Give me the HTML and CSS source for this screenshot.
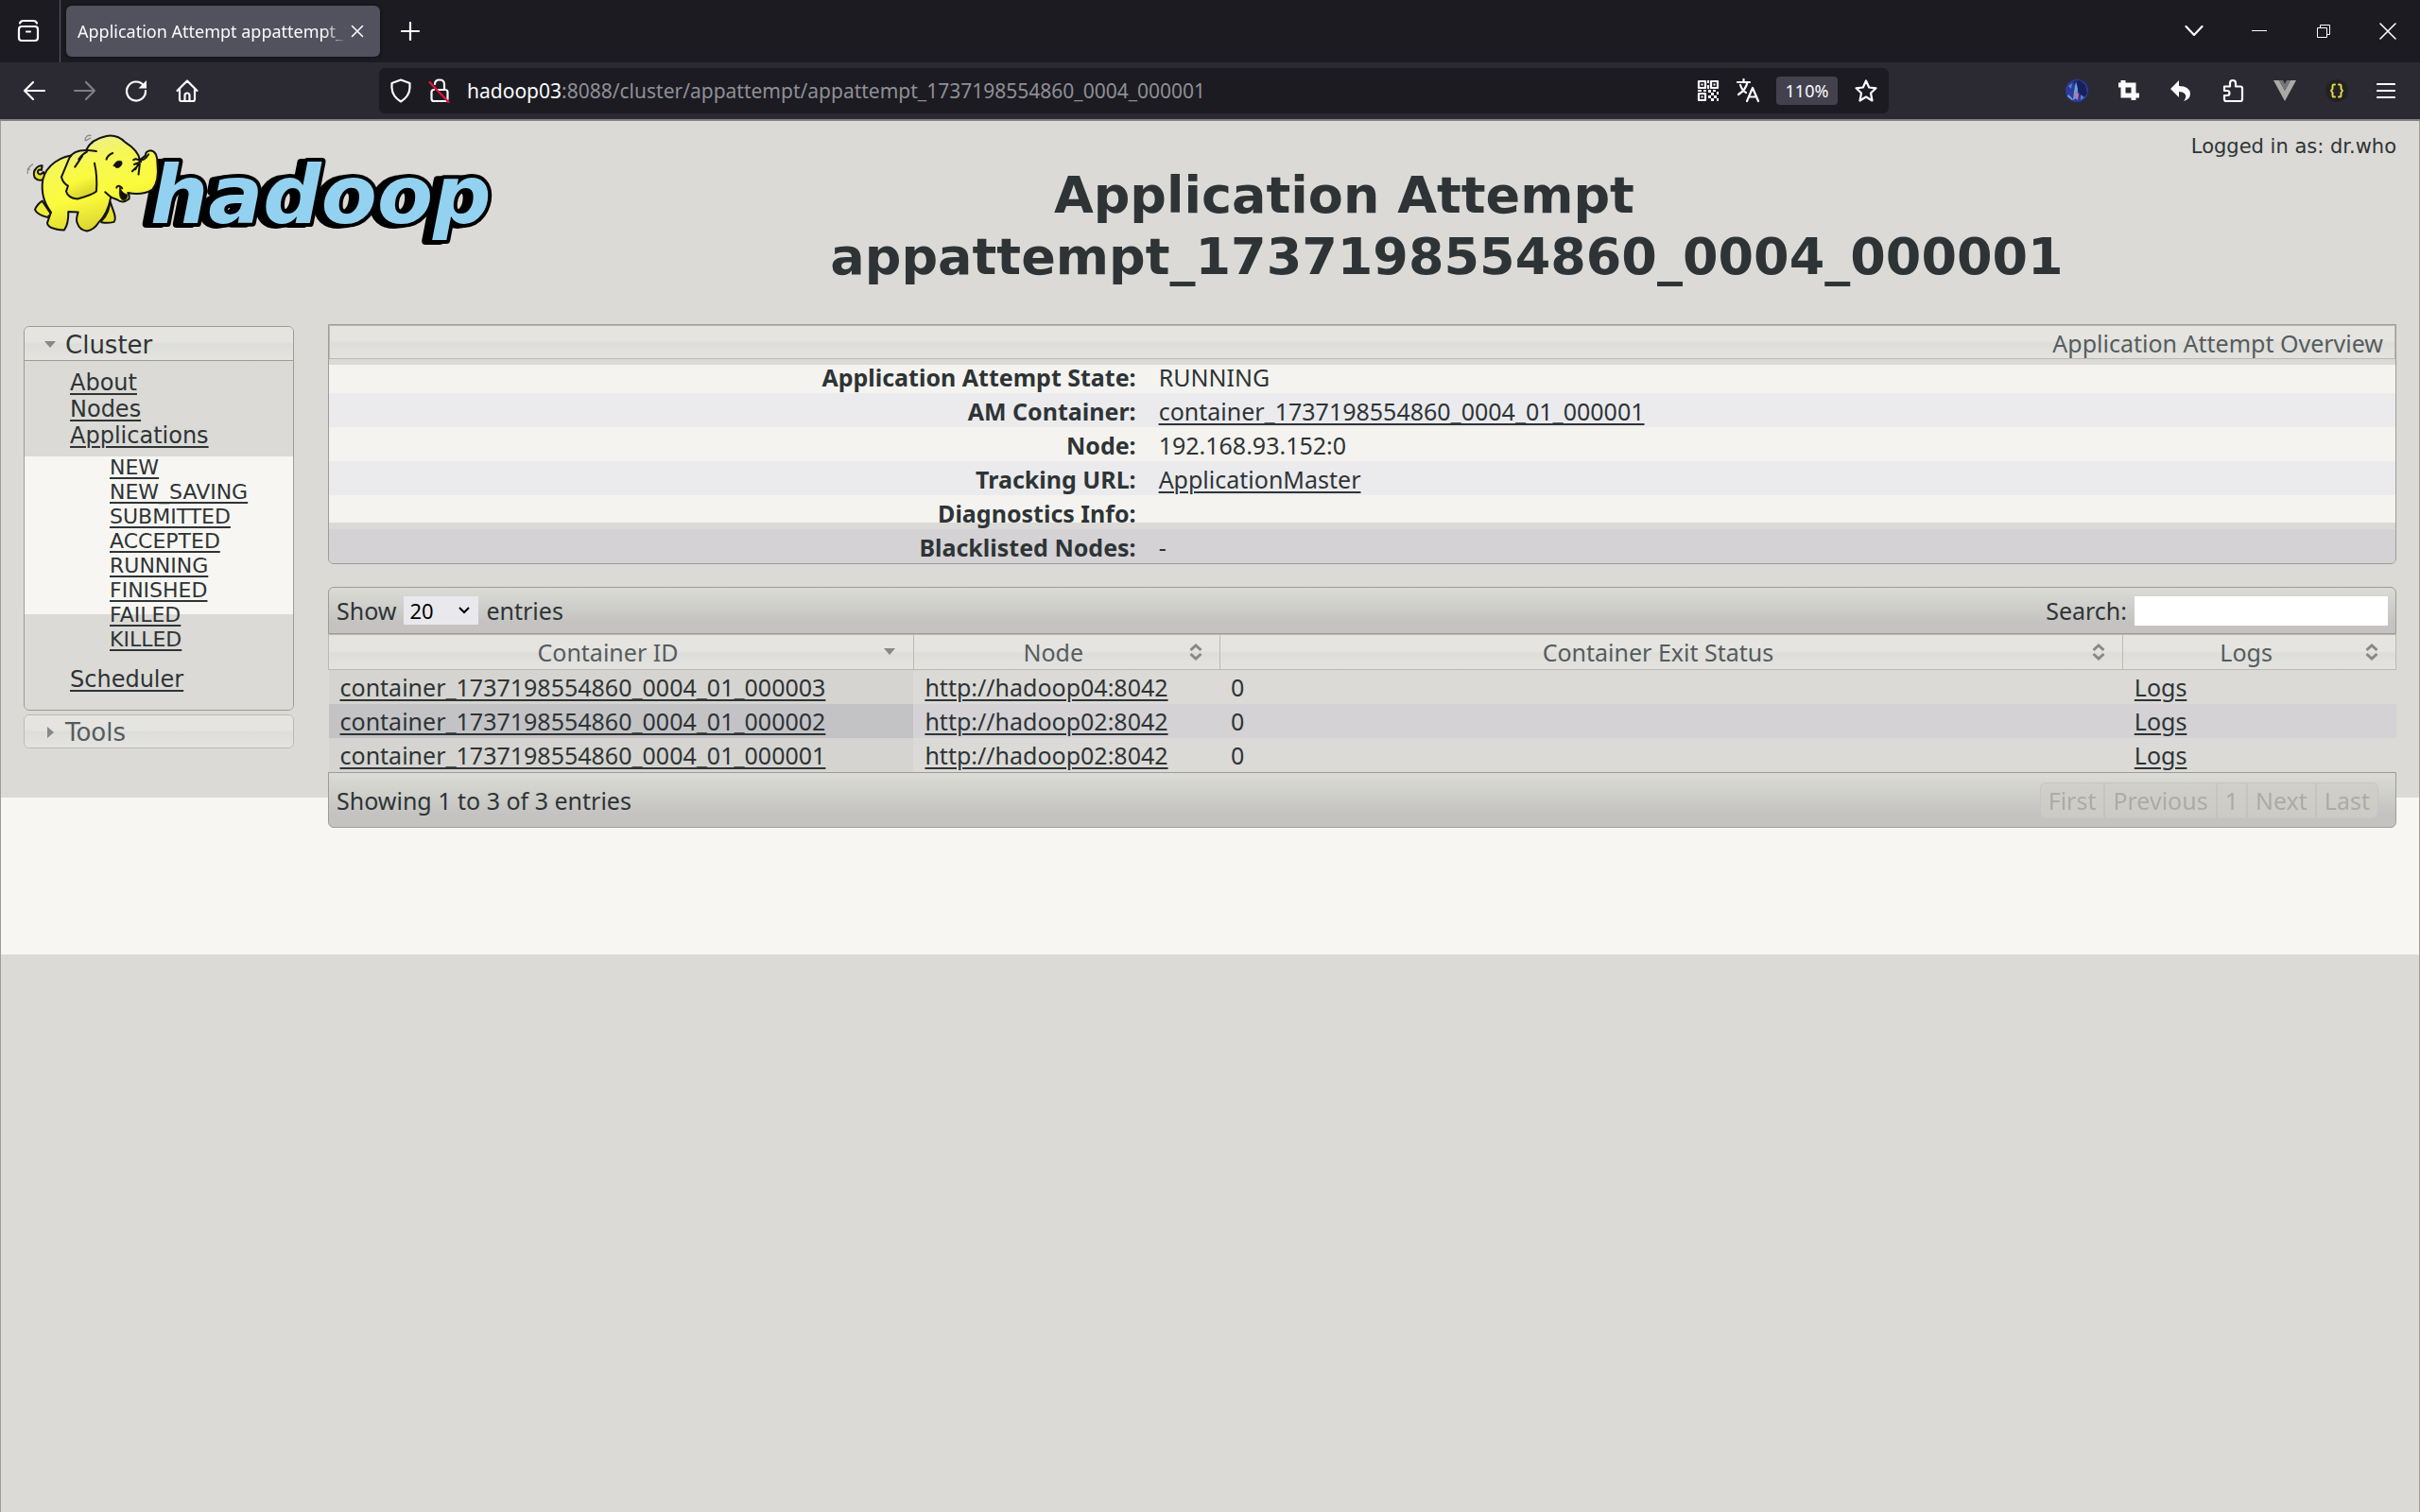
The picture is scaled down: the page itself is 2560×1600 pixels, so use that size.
FILE: index.html
```html
<!DOCTYPE html>
<html lang="en">
<head>
<meta charset="utf-8">
<title>Application Attempt appattempt_1737198554860_0004_000001</title>
<link rel="stylesheet" href="styles.css">
</head>
<body>
<header class="browser">
  <div class="tabs">
    <button class="icon-btn tab-list" aria-label="Recent browsing"><svg width="26" height="26" viewBox="0 0 26 26"><path d="M4 4.500Q5 2 7.500 2h11Q21 2 22 4.500M6 8h14q3 0 3 3v9q0 3-3 3H6q-3 0-3-3v-9q0-3 3-3zM11 13.500h4"/></svg></button>
    <div class="tab">
      <span class="tab-title">Application Attempt appattempt_1737198554860_0004_000001</span>
      <button class="icon-btn tab-close" aria-label="Close tab"><svg width="14" height="14" viewBox="0 0 14 14"><path class="thin" d="M1.500 1.500l11 11M12.500 1.500l-11 11"/></svg></button>
    </div>
    <button class="icon-btn new-tab" aria-label="New tab"><svg width="20" height="20" viewBox="0 0 20 20"><path d="M10 1v18M1 10h18"/></svg></button>
    <div class="window-controls">
      <button class="icon-btn" aria-label="List all tabs"><svg width="20" height="20" viewBox="0 0 20 20"><path d="M1.500 5l8.500 9 8.500-9"/></svg></button>
      <button class="icon-btn" aria-label="Minimize"><svg width="18" height="18" viewBox="0 0 18 18"><path class="hair" d="M1 8.500h16"/></svg></button>
      <button class="icon-btn" aria-label="Restore"><svg width="18" height="18" viewBox="0 0 18 18"><path class="hair" d="M2.500 5.500h10v10h-10zM5.500 5V2.500h10v10H13"/></svg></button>
      <button class="icon-btn" aria-label="Close"><svg width="18" height="18" viewBox="0 0 18 18"><path class="thin" d="M1 1l16 16M17 1L1 17"/></svg></button>
    </div>
  </div>
  <div class="toolbar">
    <div class="nav-buttons">
      <button class="icon-btn" aria-label="Back"><svg width="26" height="26" viewBox="0 0 26 26"><path d="M24 13H3M12 4l-9 9 9 9"/></svg></button>
      <button class="icon-btn dim" aria-label="Forward"><svg width="26" height="26" viewBox="0 0 26 26"><path d="M2 13h21M14 4l9 9-9 9"/></svg></button>
      <button class="icon-btn" aria-label="Reload"><svg width="26" height="26" viewBox="0 0 26 26"><path d="M21 7.500A10 10 0 1 0 23 13"/><path class="solid" d="M24 2v8.500h-8.500z"/></svg></button>
      <button class="icon-btn" aria-label="Home"><svg width="26" height="26" viewBox="0 0 26 26"><path d="M2.500 13L13 2.500 23.500 13M5 11v11q0 2 2 2h12q2 0 2-2V11M10.500 24v-6q0-2.500 2.500-2.500t2.500 2.500v6"/></svg></button>
    </div>
    <div class="urlbar">
      <svg width="24" height="26" viewBox="0 0 24 26"><path d="M12 1.500L21.500 5v5Q21 19 12 24.500 3 19 2.500 10V5z"/></svg>
      <svg width="24" height="26" viewBox="0 0 24 26"><path d="M7 6q0-4.500 5-4.500T17 6v6M9 12h9q2.500 0 2.500 2.500v7q0 2.500-2.500 2.500H6q-2.500 0-2.500-2.500v-7Q3.500 12 6 12"/><path class="slash" d="M1.500 4l20 21"/></svg>
      <span class="url"><b>hadoop03</b>:8088/cluster/appattempt/appattempt_1737198554860_0004_000001</span>
      <svg width="24" height="24" viewBox="0 0 24 24"><path d="M2 2h7v7H2zM15 2h7v7h-7zM2 15h7v7H2z"/><path class="solid" d="M4.500 4.500h2v2h-2zM17.500 4.500h2v2h-2zM4.500 17.500h2v2h-2zM11 1h2v3h-2zM11 6h2v4h-2zM1 11h4v2H1zM7 11h3v2H7zM12 11h3v3h-3zM17 11h3v2h-3zM21 13h2v3h-2zM15 14h3v3h-3zM12 17h3v3h-3zM18 17h3v3h-3zM15 20h3v3h-3zM21 20h2v3h-2z"/></svg>
      <svg width="26" height="26" viewBox="0 0 26 26"><path d="M2 4h13M8.500 1v3M12.500 4Q11 12 3 17M5 7q2 6 6 8M12 24l6-14 6 14M14 19.500h8"/></svg>
      <button class="zoom-level">110%</button>
      <svg width="26" height="26" viewBox="0 0 26 26"><path d="M13 2.500l3.200 7 7.300.8-5.500 5.200 1.500 8L13 19.500 6.500 23.500l1.500-8L2.500 10.300l7.300-.8z"/></svg>
    </div>
    <div class="extensions">
      <button class="icon-btn avatar" aria-label="Profile"><svg width="26" height="26" viewBox="0 0 26 26"><circle cx="13" cy="13" r="12" fill="#2b3d9c"/><path class="night" d="M9 3l7-1 6 5 2 9-6 7-3-9z"/><path class="glow" d="M12 3l2 8-1 9-4 3 1-9zM4 17l5 5-1 1-5-4z"/><path class="rose" d="M11 14l4 2-1 7-4-3z"/><path class="sky" d="M17 17l4 3-4 3zM4 8l4-3-1 6z"/></svg></button>
      <button class="icon-btn" aria-label="Capture"><svg width="26" height="26" viewBox="0 0 26 26"><path class="heavy" d="M2 7h16v16M7 2v16h17"/></svg></button>
      <button class="icon-btn" aria-label="Undo"><svg width="26" height="26" viewBox="0 0 26 26"><path class="solid" d="M11 2v6q11 0 12 8 0 6-7 8 4-5 1-8-2-2-6-2v6L2 11z"/></svg></button>
      <button class="icon-btn" aria-label="Extensions"><svg width="26" height="26" viewBox="0 0 26 26"><path d="M4 8.500h6V5q0-3 3-3t3 3v3.500h5q2 0 2 2V22q0 2-2 2H6q-2 0-2-2v-4h3q2.500 0 2.500-2.500T7 13H4z"/></svg></button>
      <button class="icon-btn vue" aria-label="Vue devtools"><svg width="26" height="26" viewBox="0 0 26 26"><path class="outer" d="M1 2h6l6 11 6-11h6L13 24z"/><path class="inner" d="M7 2h4l2 4 2-4h4l-6 11z"/></svg></button>
      <button class="icon-btn" aria-label="JSON viewer"><svg width="26" height="26" viewBox="0 0 26 26"><circle cx="13" cy="13" r="12" fill="#222"/><path class="brace" d="M11 6.500H9.500Q8.500 6.500 8.500 8v3L7 13l1.500 2v3q0 1.500 1 1.500H11M15 6.500h1.500q1 0 1 1.500v3l1.500 2-1.500 2v3q0 1.500-1 1.500H15"/></svg></button>
      <button class="icon-btn" aria-label="Menu"><svg width="20" height="20" viewBox="0 0 20 20"><path d="M1 3h18M1 10h18M1 17h18"/></svg></button>
    </div>
  </div>
</header>

<div class="page">
  <div class="masthead">
    <a class="logo" href="#" aria-label="Hadoop">
      <svg width="510" height="140" viewBox="0 0 510 140">
        <defs>
          <linearGradient id="skin" x1="0" y1="0" x2="0.300" y2="1"><stop offset="0" stop-color="#e9e9ae"/><stop offset="0.350" stop-color="#f6f755"/><stop offset="0.700" stop-color="#fbfb3c"/><stop offset="1" stop-color="#dcd830"/></linearGradient>
        </defs>
        <text x="139" y="106">hadoop</text>
        <g class="elephant" transform="scale(0.333)">
          <path fill="#e6e230" d="M262 312Q290 285 288 245L302 285Q309 306 302 315 282 320 262 316z"/>
          <path fill="#efec3a" d="M74 248Q58 258 51 276 58 292 90 300L102 290z"/>
          <path fill="#e6e230" d="M84 176Q66 190 50 174 43 156 55 144 64 134 74 136L72 150Q60 146 60 158 66 170 78 156z"/>
          <path fill="url(#skin)" d="M186 102C130 102 86 138 76 180 70 220 80 256 102 284L90 318Q92 338 144 341 158 320 157 282L188 284Q180 308 186 320 192 340 216 344 240 338 252 318 282 290 292 236L312 244Q330 258 350 242 352 230 346 222 390 232 424 212 446 186 440 130 440 90 418 88 402 90 402 104L384 118C380 90 354 72 338 62 320 44 300 38 278 42 240 50 222 68 214 86z"/>
          <path fill="url(#skin)" d="M246 90C200 82 170 90 160 112L135 172Q140 192 156 200L150 218Q156 240 186 242 232 230 246 218 250 170 240 128"/>
          <path fill="none" d="M216 92q-16 8-26 24M202 104q-10 16-24 36M278 116q4-14 20-20M364 118q10-8 24 6M366 132l16-6-12 22M384 130l-4 34M360 154l12-12M384 118q16 2 28-18M310 206q6-12 18 2M274 220l18 16"/>
          <path class="ink" d="M300 136q10-20 26-14 6 10-8 20-10 4-14-4zM322 206q4 18 22 22 2 16-12 18-16-2-12-40z"/>
          <path class="motion" fill="none" d="M28 160q-2-18 16-28M34 148l-6-2M210 56q2-18 18-16M214 56l14-8"/>
        </g>
      </svg>
    </a>
    <div class="heading">
      <div class="user">Logged in as: dr.who</div>
      <h1>Application Attempt appattempt_1737198554860_0004_000001</h1>
    </div>
  </div>

  <div class="columns">
    <nav class="side">
      <section class="fold">
        <h3><svg class="arrow" width="14" height="14" viewBox="0 0 14 14"><path d="M1 3h12L7 10z"/></svg>Cluster</h3>
        <ul class="menu">
          <li><a href="#">About</a></li>
          <li><a href="#">Nodes</a></li>
          <li><a href="#">Applications</a>
            <ul class="states">
              <li><a href="#">NEW</a></li>
              <li><a href="#">NEW_SAVING</a></li>
              <li><a href="#">SUBMITTED</a></li>
              <li><a href="#">ACCEPTED</a></li>
              <li><a href="#">RUNNING</a></li>
              <li><a href="#">FINISHED</a></li>
              <li><a href="#">FAILED</a></li>
              <li><a href="#">KILLED</a></li>
            </ul>
          </li>
          <li><a href="#">Scheduler</a></li>
        </ul>
      </section>
      <section class="fold closed">
        <h3><svg class="arrow" width="14" height="14" viewBox="0 0 14 14"><path d="M4 1v12l7-6z"/></svg>Tools</h3>
      </section>
    </nav>

    <main class="content">
      <section class="overview">
        <h2>Application Attempt Overview</h2>
        <table>
          <tr><th scope="row">Application Attempt State:</th><td>RUNNING</td></tr>
          <tr><th scope="row">AM Container:</th><td><a href="#">container_1737198554860_0004_01_000001</a></td></tr>
          <tr><th scope="row">Node:</th><td>192.168.93.152:0</td></tr>
          <tr><th scope="row">Tracking URL:</th><td><a href="#">ApplicationMaster</a></td></tr>
          <tr><th scope="row">Diagnostics Info:</th><td></td></tr>
          <tr><th scope="row">Blacklisted Nodes:</th><td>-</td></tr>
        </table>
      </section>

      <section class="grid">
        <div class="bar bar-top">
          <label class="length">Show <span class="select-wrap"><select><option>20</option><option>40</option><option>60</option></select><svg width="12" height="10" viewBox="0 0 12 10"><path d="M1 2l5 5 5-5"/></svg></span> entries</label>
          <label class="search">Search: <input type="text"></label>
        </div>
        <table>
          <thead>
            <tr>
              <th class="c-id"><div>Container ID<svg class="down" width="14" height="18" viewBox="0 0 14 18"><path d="M1 5h12l-6 7z"/></svg></div></th>
              <th class="c-node"><div>Node<svg width="14" height="18" viewBox="0 0 14 18"><path d="M1.500 7L7 2l5.500 5M1.500 11L7 16l5.500-5"/></svg></div></th>
              <th class="c-exit"><div>Container Exit Status<svg width="14" height="18" viewBox="0 0 14 18"><path d="M1.500 7L7 2l5.500 5M1.500 11L7 16l5.500-5"/></svg></div></th>
              <th class="c-logs"><div>Logs<svg width="14" height="18" viewBox="0 0 14 18"><path d="M1.500 7L7 2l5.500 5M1.500 11L7 16l5.500-5"/></svg></div></th>
            </tr>
          </thead>
          <tbody>
            <tr><td><a href="#">container_1737198554860_0004_01_000003</a></td><td><a href="#">http://hadoop04:8042</a></td><td>0</td><td><a href="#">Logs</a></td></tr>
            <tr><td><a href="#">container_1737198554860_0004_01_000002</a></td><td><a href="#">http://hadoop02:8042</a></td><td>0</td><td><a href="#">Logs</a></td></tr>
            <tr><td><a href="#">container_1737198554860_0004_01_000001</a></td><td><a href="#">http://hadoop02:8042</a></td><td>0</td><td><a href="#">Logs</a></td></tr>
          </tbody>
        </table>
        <div class="bar bar-bottom">
          <span>Showing 1 to 3 of 3 entries</span>
          <div class="pager"><button disabled>First</button><button disabled>Previous</button><button disabled>1</button><button disabled>Next</button><button disabled>Last</button></div>
        </div>
      </section>
    </main>
  </div>
</div>
</body>
</html>
```
FILE: styles.css
```css
* { box-sizing: border-box; }

body {
  margin: 0;
  min-height: 100vh;
  display: flex;
  flex-direction: column;
  background: #dbdad6;
  color: #2e3436;
  font: 25px/36px "Noto Sans", sans-serif;
}

a { color: inherit; text-decoration-thickness: 2px; text-underline-offset: 3px; }
ul { list-style: none; margin: 0; padding: 0; }
table { width: 100%; border-collapse: collapse; table-layout: fixed; }
svg { display: block; flex: none; }
button, select, input { font: inherit; color: inherit; border: 0; margin: 0; padding: 0; background: none; }

/* Browser chrome */
.browser { color: #fbfbfe; font: 21px/28px "Noto Sans", sans-serif; }
.browser path { fill: none; stroke: #fbfbfe; stroke-width: 2.200; stroke-linecap: round; stroke-linejoin: round; }
.browser .thin { stroke-width: 1.600; }
.browser .hair { stroke-width: 1; stroke-linecap: butt; stroke-linejoin: miter; }
.browser .heavy { stroke-width: 5; stroke-linecap: butt; stroke-linejoin: miter; }
.browser .solid { fill: #fbfbfe; stroke: none; }
.browser .slash { stroke: #e6123d; }
.browser .brace { stroke: #e8d44d; stroke-width: 2; }
.browser .avatar path, .browser .vue path { stroke: none; }
.browser .night { fill: #16205c; }
.browser .glow { fill: #6aa5dd; }
.browser .rose { fill: #b27bb3; }
.browser .sky { fill: #4c83d4; }
.browser .outer { fill: #a9a9a9; }
.browser .inner { fill: #777; }
.icon-btn { display: flex; align-items: center; justify-content: center; }
.dim { opacity: 0.4; }

.tabs { height: 66px; display: flex; align-items: center; background: #1c1b22; }
.tab-list { width: 64px; height: 66px; border-right: 1px solid #5b5a63; padding-right: 4px; }
.tab {
  width: 332px; height: 54px; margin-left: 6px; padding: 0 17px 0 12px;
  display: flex; align-items: center; gap: 4px;
  background: #52525e; border-radius: 6px; box-shadow: 0 0 4px #0008;
}
.tab-title {
  flex: 1; overflow: hidden; white-space: nowrap; font-size: 18px;
  mask-image: linear-gradient(to left, transparent, #000 24px);
}
.new-tab { width: 64px; }
.window-controls { margin-left: auto; display: flex; gap: 50px; padding-right: 25px; }

.toolbar { height: 62px; display: flex; align-items: center; background: #2b2a33; border-bottom: 2px solid #84817f; }
.nav-buttons { width: 401px; padding-left: 23px; display: flex; gap: 28px; }
.urlbar {
  flex: 1; max-width: 1597px; height: 48px; padding: 0 11px;
  display: flex; align-items: center; gap: 17px;
  background: #1c1b22; border-radius: 6px;
}
.url { flex: 1; color: #8f8f96; }
.url b { font-weight: 400; color: #fbfbfe; }
.zoom-level { width: 65px; height: 30px; border-radius: 4px; background: #42414d; font-size: 18px; line-height: 30px; }
.extensions { margin-left: auto; display: flex; gap: 29px; padding-right: 26px; }

/* Page */
.page {
  flex: 1; border: solid #a09b94; border-width: 0 1px;
  padding: 0 24px;
  background: linear-gradient(#dbdad6 716px, #f7f6f2 716px, #f7f6f2 882px, #dbdad6 882px);
}
.masthead { min-height: 215px; display: flex; }
.logo { width: 500px; padding-top: 2px; margin-left: -5px; }
.logo text {
  font: italic bold 86px "DejaVu Sans", sans-serif;
  fill: #93d1f0; stroke: #000; stroke-width: 8; stroke-linejoin: round; paint-order: stroke;
  filter: drop-shadow(-7px 1px 0 #000);
}
.elephant path { stroke: #141414; stroke-width: 6; stroke-linecap: round; stroke-linejoin: round; }
.elephant .ink { fill: #111; stroke-width: 2; }
.elephant .motion { stroke: #8a8a88; stroke-width: 4; }

.heading { flex: 1; padding-left: 6px; }
.user { float: right; height: 64px; padding-top: 12px; font: 21px/30px "DejaVu Sans", sans-serif; }
h1 { margin: 0; padding-top: 46px; font: bold 54px/65px "DejaVu Sans", sans-serif; text-align: center; }

.columns { display: flex; gap: 36px; align-items: flex-start; }
.side { width: 286px; padding-top: 2px; display: grid; gap: 4px; font-family: "DejaVu Sans", sans-serif; }
.fold { border: 1px solid #a09b94; border-radius: 6px; overflow: hidden; }
.closed { border-color: #bcb9b4; color: #555c5e; }
.fold h3 {
  margin: 0; height: 36px; padding: 2px 0 0 20px;
  display: flex; align-items: center; gap: 9px;
  font-size: 26px; font-weight: 400; border-bottom: 1px solid #a09b94;
}
.closed h3 { height: 34px; border: 0; }
.arrow { fill: #888; }
.fold h3, .overview h2, .grid th { background: linear-gradient(#e5e4e0 45%, #dddeda 52%, #e4e3df); }
.menu {
  height: 369px; padding: 9px 0 0 48px; font-size: 24px; line-height: 28px;
  background: linear-gradient(#dbdad6 101px, #f7f6f2 101px, #f7f6f2 268px, #dbdad6 268px);
}
.states { padding: 7px 0 15px 42px; font-size: 22px; line-height: 26px; }

.content { flex: 1; display: grid; gap: 24px; }
.overview { border: 1px solid #a09b94; border-radius: 0 0 6px 6px; overflow: hidden; }
.overview h2 {
  margin: 0; height: 36px; padding: 0 12px 0 0;
  font-size: 25px; line-height: 36px; font-weight: 400; text-align: right; color: #555c5e;
  border: 1px solid #bcb9b4;
}
.overview th { text-align: right; font-weight: 700; width: 39.600%; }
.overview th, .overview td { height: 36px; padding: 2px 12px 0; line-height: 34px; }
.overview tr { background: #f4f3ef; }
.overview tr:nth-child(even) { background: #ebebee; }
.overview tr:first-child { background: linear-gradient(#dbdad6 6px, #f4f3ef 6px); }
.overview tr:nth-child(5) { background: linear-gradient(#f4f3ef 29px, #dbdad6 29px); }
.overview tr:last-child { background: #d4d2d5; }

.bar { display: flex; align-items: center; justify-content: space-between; border: 1px solid #a09b94; background: linear-gradient(#dbdcd6, #c4c3c1 75%); }
.bar-top { height: 50px; padding: 0 8px; border-radius: 6px 6px 0 0; }
.bar-bottom { height: 59px; padding: 0 18px 0 8px; border-radius: 0 0 6px 6px; }
.length, .search { display: flex; align-items: center; gap: 8px; }
.select-wrap { display: grid; align-items: center; background: #e9e9ed; color: #000; }
.select-wrap > * { grid-area: 1 / 1; }
.select-wrap svg { justify-self: end; margin-right: 9px; fill: none; stroke: #000; stroke-width: 2; pointer-events: none; }
.select-wrap select { appearance: none; width: 79px; height: 30px; padding-left: 6px; font-size: 22px; line-height: 30px; }
.search input { width: 268px; height: 31px; background: #fff; }

.grid table { background: #dbdad6; }
.grid th {
  height: 37px; padding: 0; font-weight: 400; color: #555c5e;
  border: 1px solid #bcb9b4;
}
.grid th div { display: flex; align-items: center; justify-content: center; position: relative; padding-right: 28px; height: 36px; line-height: 36px; }
.grid th svg { position: absolute; right: 18px; top: 9px; fill: none; stroke: #888; stroke-width: 3; }
.grid th .down { fill: #888; stroke: none; }
.c-id { width: 28.300%; }
.c-node { width: 14.800%; }
.c-exit { width: 43.700%; }
.grid td { height: 36px; padding: 0 12px; line-height: 36px; }
.grid td:first-child { background: #d5d4d0; }
.grid tr:nth-child(even) td { background: #d4d2d5; }
.grid tr:nth-child(even) td:first-child { background: #c3c3c6; }

.pager { display: flex; height: 38px; border: 1px solid #c6c5bf; border-radius: 6px; overflow: hidden; }
.pager button { padding: 0 8px; color: #a3a39f; background: #cfcec9; opacity: 0.800; border-right: 2px solid #c3c2bb; line-height: 36px; }
.pager button:last-child { border: 0; }
```
